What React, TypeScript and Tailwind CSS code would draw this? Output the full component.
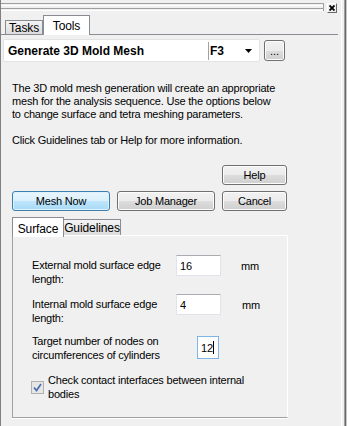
import React from "react";

const font = { fontFamily: '"Liberation Sans", Arial, sans-serif' };

function Btn({ children, w, primary }: { children: React.ReactNode; w: string; primary?: boolean }) {
  return (
    <div
      className={`${w} h-[20px] rounded-[3px] border flex items-center justify-center text-[11px] text-black tracking-[-0.2px] ${
        primary
          ? "border-[#3c7fb1] bg-[linear-gradient(#eaf6fd_0%,#d9f0fc_50%,#bee6fd_51%,#a7d9f5_100%)] shadow-[inset_0_0_0_1px_#e0f2fd]"
          : "border-[#707070] bg-[linear-gradient(#f2f2f2_0%,#ebebeb_50%,#dddddd_51%,#cfcfcf_100%)] shadow-[inset_0_0_0_1px_#fcfcfc]"
      }`}
    >
      {children}
    </div>
  );
}

export default function App() {
  return (
    <div className="w-[347px] h-[426px] bg-[#f0f0f0] flex overflow-hidden text-black" style={font}>
      <div className="w-[341px] h-full border-l border-[#808080] flex flex-col">
        {/* header */}
        <div className="h-[15px] flex items-start">
          <div className="w-[322px] pt-[3px] flex flex-col gap-[2px]">
            <div className="h-[3px] border-t border-[#a0a0a0] border-b border-b-white bg-[#f0f0f0]" />
            <div className="h-[3px] border-t border-[#a0a0a0] border-b border-b-white bg-[#f0f0f0]" />
          </div>
          <div className="w-[1px] h-[8px] mt-[3px] bg-[#a0a0a0]" />
          <div className="ml-[3px] mt-[3px] w-[10px] h-[10px] border border-t-white border-l-white border-r-[#696969] border-b-[#696969] bg-[#f0f0f0] flex items-center justify-center">
            <svg width="6" height="6" viewBox="0 0 6 6">
              <path d="M0.5 0.5 L5.5 5.5 M5.5 0.5 L0.5 5.5" stroke="#000" strokeWidth="1.8" />
            </svg>
          </div>
        </div>
        {/* top tabs */}
        <div className="h-[20px] w-[337px] border-b border-[#898c95] flex items-end">
          <div className="ml-[4px] w-[38px] h-[14px] border border-b-0 border-[#898c95] bg-[linear-gradient(#f3f3f3,#dcdcdc)] flex items-center justify-center text-[12px] tracking-[-0.1px]">
            Tasks
          </div>
          <div className="w-[47px] h-[20px] mb-[-1px] border border-b-0 border-[#898c95] bg-white flex items-start justify-center pt-[1px] text-[12px] tracking-[-0.1px]">
            Tools
          </div>
        </div>
        {/* combo */}
        <div className="mt-[4px] flex items-start">
          <div className="ml-[2px] w-[257px] h-[23px] bg-white border border-[#e3e3e3] rounded-[2px] flex items-center">
            <div className="w-[204px] pl-[4px] text-[12px] font-bold whitespace-nowrap">Generate 3D Mold Mesh</div>
            <div className="w-[1px] h-[18px] bg-[#a0a0a0]" />
            <div className="pl-[1px] w-[34px] text-[12px] font-bold">F3</div>
            <svg width="7" height="4" viewBox="0 0 7 4" className="ml-[2px]">
              <path d="M0 0 H7 L3.5 4 Z" fill="#000" />
            </svg>
          </div>
          <div className="ml-[4px] mt-[1px] w-[21px] h-[21px] rounded-[3px] border border-[#707070] bg-[linear-gradient(#f2f2f2_0%,#ebebeb_50%,#dddddd_51%,#cfcfcf_100%)] shadow-[inset_0_0_0_1px_#fcfcfc] flex items-end justify-center pb-[3px] text-[11px] leading-[11px]">
            ...
          </div>
        </div>
        {/* description */}
        <div className="mt-[20px] ml-[11px] text-[11px] leading-[13px] tracking-[-0.2px]">
          <div>The 3D mold mesh generation will create an appropriate</div>
          <div>mesh for the analysis sequence. Use the options below</div>
          <div>to change surface and tetra meshing parameters.</div>
          <div>&nbsp;</div>
          <div>Click Guidelines tab or Help for more information.</div>
        </div>
        {/* help */}
        <div className="mt-[18px] ml-[221px]">
          <Btn w="w-[65px]">Help</Btn>
        </div>
        <div className="mt-[6px] ml-[11px] flex gap-[7px]">
          <Btn w="w-[98px]" primary>
            Mesh Now
          </Btn>
          <Btn w="w-[98px]">Job Manager</Btn>
          <Btn w="w-[65px]">Cancel</Btn>
        </div>
        {/* inner tabs */}
        <div className="mt-[6px] ml-[11px] flex items-end h-[18px] relative z-10">
          <div className="w-[52px] h-[20px] mb-[-2px] border border-b-0 border-[#898c95] bg-white flex items-start justify-center pt-[2px] text-[12px] tracking-[-0.1px]">
            Surface
          </div>
          <div className="w-[57px] h-[16px] border border-l-0 border-b-0 border-[#898c95] bg-[linear-gradient(#f3f3f3,#dcdcdc)] flex items-center justify-center text-[12px] tracking-[-0.1px]">
            Guidelines
          </div>
        </div>
        {/* panel */}
        <div className="ml-[11px] w-[276px] h-[183px] border-l border-l-[#a0a0a0] border-t border-t-white border-r border-r-white border-b border-b-[#a0a0a0] shadow-[0_1px_0_#ffffff] flex flex-col pl-[19px] pt-[19px] text-[11px] leading-[14px] tracking-[-0.2px]">
          <div className="flex items-start">
            <div className="w-[144px] mt-[3px]">
              External mold surface edge
              <br />
              length:
            </div>
            <div className="w-[45px] h-[21px] bg-white border border-[#e2e3ea] border-t-[#abadb3] flex items-center pl-[3px]">16</div>
            <div className="ml-[20px] h-[21px] flex items-center">mm</div>
          </div>
          <div className="flex items-start mt-[8px]">
            <div className="w-[144px] mt-[3px]">
              Internal mold surface edge
              <br />
              length:
            </div>
            <div className="w-[45px] h-[21px] bg-white border border-[#e2e3ea] border-t-[#abadb3] flex items-center pl-[3px]">4</div>
            <div className="ml-[21px] h-[21px] flex items-center">mm</div>
          </div>
          <div className="flex items-start mt-[11px]">
            <div className="w-[165px] mt-[-2px]">
              Target number of nodes on
              <br />
              circumferences of cylinders
            </div>
            <div className="w-[22px] h-[23px] bg-white border border-[#7eb4ea] flex items-center pl-[3px]">
              <span>12</span>
              <span className="w-[1px] h-[13px] bg-black" />
            </div>
          </div>
          <div className="flex items-center mt-[11px] ml-[-1px]">
            <div className="w-[13px] h-[13px] border border-[#b1b1b1] bg-[#e6e6e6] flex items-center justify-center">
              <svg width="9" height="9" viewBox="0 0 9 9">
                <path d="M1 4.5 L3.5 7.5 L8 1" stroke="#4a6fb0" strokeWidth="1.7" fill="none" />
              </svg>
            </div>
            <div className="ml-[4px]">
              Check contact interfaces between internal
              <br />
              bodies
            </div>
          </div>
        </div>
      </div>
      {/* right edge */}
      <div className="w-[1px] h-full bg-white" />
      <div className="w-[2px] h-full bg-[#f0f0f0]" />
      <div className="w-[1px] h-full bg-[#a0a0a0]" />
      <div className="w-[1px] h-full bg-[#696969]" />
      <div className="w-[1px] h-full bg-[#c8c8c8]" />
    </div>
  );
}
